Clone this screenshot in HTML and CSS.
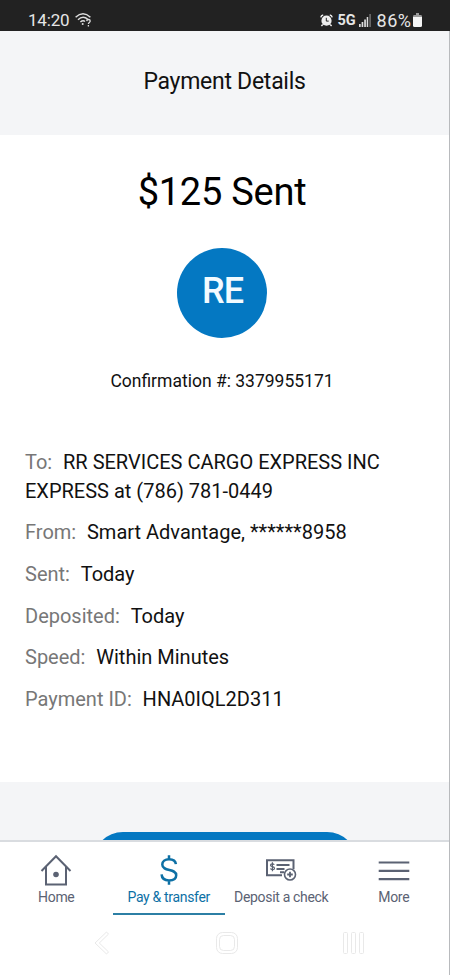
FILE: index.html
```html
<!DOCTYPE html>
<html lang="en">
<head>
<meta charset="utf-8">
<title>Payment Details</title>
<link rel="stylesheet" href="styles.css">
</head>
<body>
<div class="phone">
  <div class="status">
    <span class="time">14:20</span>
    <svg class="wifi" width="18" height="16" viewBox="0 0 18 16" fill="none" stroke="#ddd" stroke-width="1.5">
      <path d="M.6 5.2Q8 -1.6 15.4 5.2M3 7.7Q8 3 12.8 7.4M5.4 10Q8 7.8 10 9.5"/>
      <circle cx="7.7" cy="12" r="1" fill="#ddd" stroke="none"/>
      <path d="M11.7 9.2q.2-1.7 1.8-1.7 1.7 0 1.7 1.5c0 1.5-1.8 1.5-1.8 3M13.4 13v1.5" stroke-width="1.3"/>
    </svg>
    <svg class="alarm" width="13" height="13" viewBox="0 0 13 13" fill="none" stroke="#eee">
      <circle cx="6.5" cy="6.7" r="5.1" fill="#eee" stroke="none"/>
      <path d="M.8 3.3Q1.2 1.2 3.2.9M12.2 3.3Q11.8 1.2 9.8.9M2.8 10.5 1.4 12M10.2 10.5l1.4 1.5" stroke-width="1.5"/>
      <path d="M6.3 3.8v3.3h2.4" stroke="#222"/>
    </svg>
    <span class="network">5G</span>
    <svg class="signal" width="12" height="13" viewBox="0 0 12 13" fill="#ddd">
      <path d="M0 10h1.7v3H0zM2.6 8h1.7v5H2.6zM5.2 5.5h1.7V13H5.2zM7.7 3h1.5v10H7.7z"/>
      <path d="M10.2 0H12v13h-1.8z" fill="#666"/>
    </svg>
    <span class="percent">86%</span>
    <svg class="battery" width="9" height="14" viewBox="0 0 9 14">
      <path d="M3 0h3v2h1.6Q9 2 9 3.4V5H0V3.4Q0 2 1.4 2H3z" fill="#999"/>
      <path d="M0 4h9v8.5Q9 14 7.5 14h-6Q0 14 0 12.5z" fill="#f5f5f5"/>
    </svg>
  </div>
  <header class="header"><h1>Payment Details</h1></header>
  <main class="content">
    <h2 class="amount"><span>$125 Sent</span></h2>
    <div class="avatar"><span>RE</span></div>
    <p class="confirmation"><span>Confirmation #: 3379955171</span></p>
    <dl class="details">
      <div><dt>To:</dt><dd>RR SERVICES CARGO EXPRESS INC<br>EXPRESS at (786) 781-0449</dd></div>
      <div><dt>From:</dt><dd>Smart Advantage, ******8958</dd></div>
      <div><dt>Sent:</dt><dd>Today</dd></div>
      <div><dt>Deposited:</dt><dd>Today</dd></div>
      <div><dt>Speed:</dt><dd>Within Minutes</dd></div>
      <div><dt>Payment ID:</dt><dd>HNA0IQL2D311</dd></div>
    </dl>
  </main>
  <div class="actions"><div class="button"></div></div>
  <nav class="tabs">
    <a class="tab">
      <svg width="32" height="32" viewBox="0 0 32 32" fill="none" stroke="#5b6273" stroke-width="2">
        <path d="M1.5 17 16 2.2 30.5 17M6 13v17.4h20V13"/>
        <circle cx="16" cy="20.5" r="2.8" fill="#5b6273" stroke="none"/>
      </svg>
      <span>Home</span>
    </a>
    <a class="tab active">
      <svg width="32" height="32" viewBox="0 0 32 32" fill="none" stroke="#0d70a5" stroke-width="2.5">
        <path d="M16 1.2v5M16 25.5v5.2M22.9 10.2C22.6 6.8 20.2 5.2 16 5.2c-4 0-6.7 2.1-6.7 5.2 0 8 13.9 3.2 13.9 10.8 0 3.4-2.9 5.2-7.2 5.2s-7.2-2.2-7.4-6"/>
      </svg>
      <span>Pay &amp; transfer</span>
    </a>
    <a class="tab">
      <svg width="32" height="32" viewBox="0 0 32 32" fill="none" stroke="#5b6273" stroke-width="2">
        <path d="M17 21.2H2V6.2h26.5v9M11.5 11h13M11.5 15h8M15 18.2h4" />
        <path d="M9.2 10.9Q8.8 9.9 7.3 9.9 5.5 9.9 5.5 11.2c0 1.9 4 .9 4 3 0 1.5-2 1.4-2 1.4-1.6 0-2.1-1.1-2.1-1.1M7.4 8.3v9" stroke-width="1.2"/>
        <circle cx="25" cy="20.5" r="5.5" fill="#fff" stroke-width="1.6"/>
        <path d="M25 17.7v5.6M22.2 20.5h5.6" stroke-width="1.8"/>
      </svg>
      <span>Deposit a check</span>
    </a>
    <a class="tab">
      <svg width="32" height="32" viewBox="0 0 32 32" stroke="#5b6273" stroke-width="2.2">
        <path d="M.7 8.5h30.6M.7 16.8h30.6M.7 25.1h30.6"/>
      </svg>
      <span>More</span>
    </a>
  </nav>
  <div class="system">
    <svg width="271" height="24" viewBox="0 0 271 24" fill="none" stroke="#e9e9e9">
      <path d="M12.5 1 1 12l11.5 11 2-2.1L5.3 12l9.2-8.9z"/>
      <rect x="122.5" y="1.5" width="21" height="21" rx="6"/>
      <rect x="125.5" y="4.5" width="15" height="15" rx="4"/>
      <rect x="249.5" y="1.5" width="4" height="21" rx="1"/>
      <rect x="257.5" y="1.5" width="4" height="21" rx="1"/>
      <rect x="265.5" y="1.5" width="4" height="21" rx="1"/>
    </svg>
  </div>
</div>
</body>
</html>
```

FILE: styles.css
```css
* { box-sizing: border-box; margin: 0; padding: 0; }
body { font-family: Roboto, sans-serif; color: #111; background: #fff; }
.phone { width: 450px; height: 975px; display: flex; flex-direction: column; overflow: hidden; background: linear-gradient(#b8babd, #b8babd) right / 1px 100% no-repeat; }
.phone > * { flex-shrink: 0; }
.status { height: 31px; padding: 9px 28px 0; display: flex; align-items: center; background: #222; color: #e6e6e6; }
.time { font-size: 17px; letter-spacing: -0.2px; width: 42px; }
.wifi { margin-left: 5px; margin-right: auto; }
.network { font-size: 14.5px; font-weight: 700; margin: 0 3px 0 4px; }
.percent { font-size: 18px; letter-spacing: 0.5px; margin: 0 1.5px 0 6px; }
.header { height: 104px; margin-right: 1px; padding-top: 37px; background: #f4f5f7; text-align: center; }
.header h1 { font-size: 23px; letter-spacing: -0.27px; line-height: 27px; font-weight: 400; }
.content { height: 647px; margin-right: 1px; padding: 33px 30px 0 25px; background: #fff; }
.amount { font-size: 38px; letter-spacing: -0.25px; line-height: 48px; font-weight: 400; text-align: center; color: #000; }
.avatar { width: 90px; height: 90px; margin: 32px auto 0; border-radius: 50%; background: #0478c2; color: #f3fbff; font-size: 36px; line-height: 86px; letter-spacing: -1px; padding-left: 1px; font-weight: 500; text-align: center; }
.confirmation { margin-top: 31px; font-size: 17.5px; line-height: 24px; text-align: center; }
.details { margin-top: 54.6px; font-size: 20px; line-height: 29px; }
.details > div { margin-bottom: 12.7px; white-space: nowrap; }
.details dt, .details dd { display: inline; }
.details dt { color: #777; margin-right: 10.8px; }
.actions { height: 58px; padding-top: 50px; margin-right: 1px; background: #f4f5f7; overflow: hidden; }
.button { width: 264px; height: 60px; margin: 0 auto; border-radius: 30px; background: #0478c2; }
.tabs { height: 75px; margin-right: 1px; padding-top: 2px; border-top: 2px solid #d9dce0; display: grid; grid-template-columns: repeat(4, 112.5px); background: #fff; color: #5b6273; }
.tab { height: 71px; padding-top: 10px; display: flex; flex-direction: column; align-items: center; font-size: 14px; letter-spacing: -0.32px; line-height: 20px; white-space: nowrap; }
.tab span { margin-top: 1px; }
.active { color: #0d70a5; border-bottom: 2px solid #2c7fa5; }
.system { height: 60px; margin-right: 1px; padding: 16px 0 0 94px; background: #fff; }
```
